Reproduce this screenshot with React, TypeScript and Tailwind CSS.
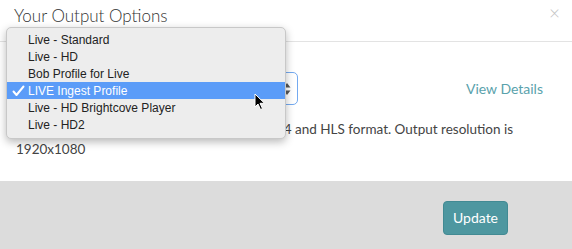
const options = [
  "Live - Standard",
  "Live - HD",
  "Bob Profile for Live",
  "LIVE Ingest Profile",
  "Live - HD Brightcove Player",
  "Live - HD2",
];

const selected = "LIVE Ingest Profile";

export default function App() {
  return (
    <div className="relative w-[572px] h-[249px] overflow-hidden bg-white font-['Lato',sans-serif] text-[#444]">
      {/* header */}
      <div className="flex h-[42px] items-center justify-between border-b border-[#e3e3e3] pl-[14px] pr-[12px]">
        <h3 className="text-[17px] font-light text-[#333] -mt-[10px]">Your Output Options</h3>
        <span className="text-[19px] font-light leading-none text-[#c4c4c4] -mt-[16px]">×</span>
      </div>

      {/* body */}
      <div className="h-[139px] px-[16px] pt-[30px]">
        <div className="flex items-center justify-between">
          <div className="flex h-[33px] w-[282px] items-center justify-between rounded-[5px] border border-[#74aaf0] pl-3 pr-[6px] text-[13px]">
            <span>{selected}</span>
            <svg width="8" height="14" viewBox="0 0 8 14">
              <path d="M4 1 L7.5 5.5 L0.5 5.5 Z" fill="#555" />
              <path d="M4 13 L7.5 8.5 L0.5 8.5 Z" fill="#555" />
            </svg>
          </div>
          <a className="mr-[13px] text-[14px] text-[#5aa2ac]">View Details</a>
        </div>
        <p className="mt-[14px] w-[520px] text-[13.5px] leading-[20px]">
          Single rendition with high quality video in MP4 and HLS format. Output resolution is 1920x1080
        </p>
      </div>

      {/* footer */}
      <div className="flex h-[68px] items-center justify-end bg-[#dcdcdc] pr-[64px] pt-[5px]">
        <button className="h-[34px] w-[65px] rounded-[4px] border border-[#428a93] bg-[#4e97a0] text-[14px] text-white">
          Update
        </button>
      </div>

      {/* native select popup */}
      <div className="absolute left-[6px] top-[27px] w-[280px] rounded-[5px] border border-[#c8c8c8] bg-[#ededed] pt-[3px] pb-[5px] shadow-[0_3px_8px_rgba(0,0,0,0.28)] font-['Liberation_Sans',sans-serif] text-[12px] text-[#222]">
        {options.map((o) => (
          <div
            key={o}
            className={`relative flex h-[17px] items-center pl-[21px] ${
              o === selected ? "bg-[#5b9cf8] text-white" : ""
            }`}
          >
            {o === selected && (
              <svg className="absolute left-[5px] top-[3px]" width="13" height="12" viewBox="0 0 13 12">
                <path d="M1.5 6.5 L4.5 10 L11.5 1.5" fill="none" stroke="#fff" strokeWidth="2" strokeLinecap="round" strokeLinejoin="round" />
              </svg>
            )}
            {o}
          </div>
        ))}
      </div>

      {/* mouse cursor */}
      <svg className="absolute left-[254px] top-[93px]" width="12" height="18" viewBox="0 0 12 18">
        <path d="M1 1 L1 14 L4 11 L6.5 16.5 L8.5 15.6 L6 10.3 L10.5 10.3 Z" fill="#000" stroke="#fff" strokeWidth="1" />
      </svg>
    </div>
  );
}
